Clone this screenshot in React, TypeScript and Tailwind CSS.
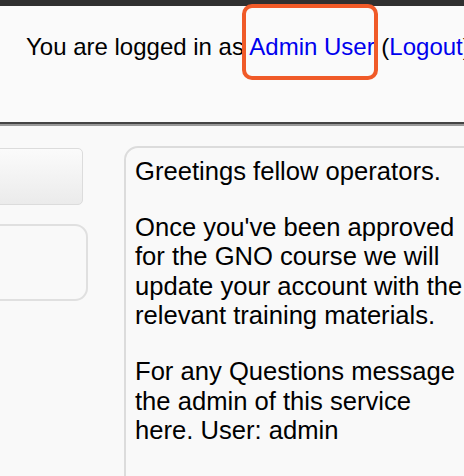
import React from 'react';

const App: React.FC = () => {
  return (
    <div
      className="relative w-[464px] h-[476px] overflow-hidden bg-[#f9f9f9] text-black"
      style={{ fontFamily: '"Liberation Sans", Arial, sans-serif' }}
    >
      {/* top dark strip */}
      <div className="h-[6px] bg-[#303030]" />

      {/* header */}
      <div className="h-[118px] bg-[#fafafa] pt-[27px] pl-[26px] border-b-2 border-[#444]">
        <div className="whitespace-nowrap text-[24px] leading-[28px]">
          You are logged in as{' '}
          <a href="#" className="text-[#0000ee]">Admin User</a>{' '}
          (<a href="#" className="text-[#0000ee]">Logout</a>)
        </div>
      </div>
      <div className="h-[2px] bg-[#9a9a9a]" />

      {/* body */}
      <div className="flex pt-[20px]">
        <div className="w-[88px] shrink-0 overflow-hidden">
          <div className="mt-[2px] mr-[5px] -ml-[20px] h-[57px] rounded-[5px] border border-[#dcdcdc] bg-gradient-to-b from-[#fbfbfb] to-[#ebebeb]" />
          <div className="mt-[19px] -ml-[20px] h-[77px] rounded-[13px] border-2 border-[#e0e0e0]" />
        </div>

        <div className="ml-[36px] w-[380px] shrink-0 h-[400px] rounded-tl-[14px] border-2 border-[#dcdcdc] pt-[9px] pl-[9px]">
          <div className="w-[340px] text-[25.6px] leading-[29.4px]">
            <p>Greetings fellow operators.</p>
            <p className="mt-[26.6px]">
              Once you've been approved for the GNO course we will update your account with the relevant training materials.
            </p>
            <p className="mt-[26.6px]">
              For any Questions message the admin of this service here. User: admin
            </p>
          </div>
        </div>
      </div>

      {/* highlight annotation */}
      <div className="absolute left-[242px] top-[4px] w-[136px] h-[76px] rounded-[10px] border-4 border-[#f05a28]" />
    </div>
  );
};

export default App;
